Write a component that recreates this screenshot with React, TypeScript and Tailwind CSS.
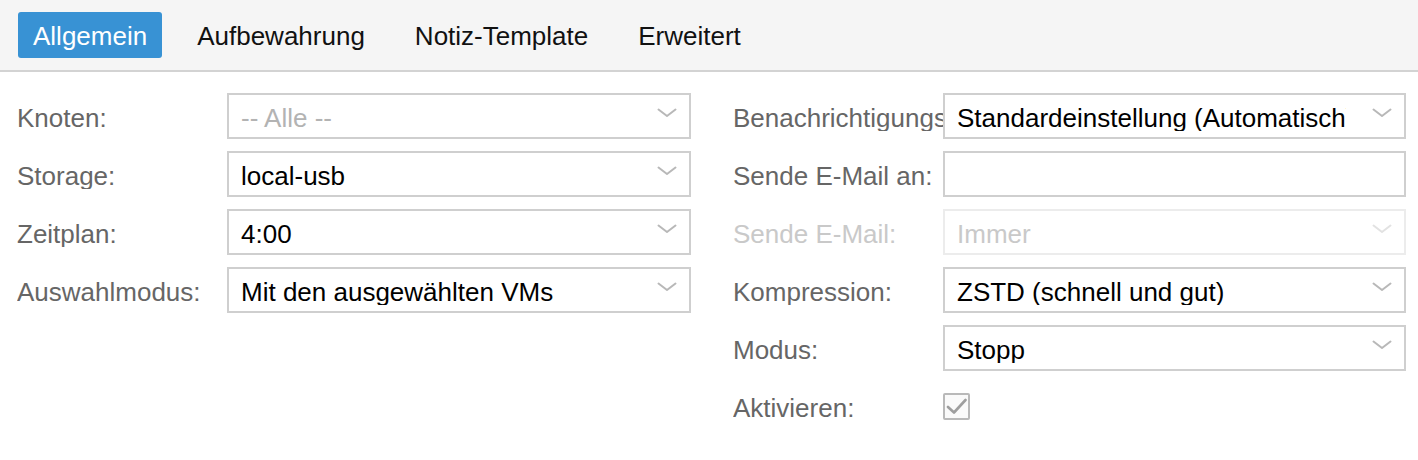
import React from "react";

const font = { fontFamily: '"Liberation Sans", Arial, sans-serif' };

function Chevron({ disabled }: { disabled?: boolean }) {
  return (
    <svg width="20" height="10" viewBox="0 0 20 10" className="shrink-0">
      <polyline
        points="1.5,1.5 10,8 18.5,1.5"
        fill="none"
        stroke={disabled ? "#e2e2e2" : "#b8b8b8"}
        strokeWidth="2"
        strokeLinecap="round"
        strokeLinejoin="round"
      />
    </svg>
  );
}

function Combo({
  value,
  placeholder,
  disabled,
  noTrigger,
}: {
  value?: string;
  placeholder?: boolean;
  disabled?: boolean;
  noTrigger?: boolean;
}) {
  const border = disabled ? "border-[#ececec]" : "border-[#cfcfcf]";
  const color = disabled ? "text-[#c9c9c9]" : placeholder ? "text-[#b3b3b3]" : "text-black";
  return (
    <div className={`flex h-[46px] min-w-0 flex-1 items-center border-2 ${border} bg-white`}>
      <div
        className={`min-w-0 flex-1 overflow-hidden whitespace-nowrap pl-[12px] pt-[4px] text-[26px] leading-none ${color}`}
      >
        {value}
      </div>
      {!noTrigger && (
        <div className="flex h-full w-[58px] shrink-0 items-center justify-end pb-[6px] pr-[12px]">
          <Chevron disabled={disabled} />
        </div>
      )}
    </div>
  );
}

function Row({
  label,
  children,
  disabled,
}: {
  label: string;
  children: React.ReactNode;
  disabled?: boolean;
}) {
  return (
    <div className="flex h-[46px] items-center">
      <div
        className={`w-[210px] shrink-0 overflow-hidden whitespace-nowrap pt-[4px] text-[26px] leading-none ${
          disabled ? "text-[#c9c9c9]" : "text-[#666666]"
        }`}
      >
        {label}
      </div>
      {children}
    </div>
  );
}

export default function App() {
  const tabs = ["Allgemein", "Aufbewahrung", "Notiz-Template", "Erweitert"];
  return (
    <div className="h-[460px] w-[1418px] overflow-hidden bg-white" style={font}>
      <div className="flex h-[72px] items-center gap-[20px] border-b-2 border-[#d3d3d3] bg-[#f5f5f5] pl-[18px] pb-[1px]">
        {tabs.map((t, i) => (
          <div
            key={t}
            className={`flex h-[46px] items-center rounded-[3px] px-[15px] pt-[2px] text-[26px] leading-none ${
              i === 0 ? "bg-[#3892d4] text-white" : "text-[#111111]"
            }`}
          >
            {t}
          </div>
        ))}
      </div>
      <div className="flex gap-[42px] pl-[17px] pr-[12px] pt-[21px]">
        <div className="flex w-[674px] shrink-0 flex-col gap-[12px]">
          <Row label="Knoten:">
            <Combo value="-- Alle --" placeholder />
          </Row>
          <Row label="Storage:">
            <Combo value="local-usb" />
          </Row>
          <Row label="Zeitplan:">
            <Combo value="4:00" />
          </Row>
          <Row label="Auswahlmodus:">
            <Combo value="Mit den ausgewählten VMs" />
          </Row>
        </div>
        <div className="flex min-w-0 flex-1 flex-col gap-[12px]">
          <Row label="Benachrichtigungsmodus:">
            <Combo value="Standardeinstellung (Automatisch)" />
          </Row>
          <Row label="Sende E-Mail an:">
            <Combo value="" noTrigger />
          </Row>
          <Row label="Sende E-Mail:" disabled>
            <Combo value="Immer" disabled />
          </Row>
          <Row label="Kompression:">
            <Combo value="ZSTD (schnell und gut)" />
          </Row>
          <Row label="Modus:">
            <Combo value="Stopp" />
          </Row>
          <Row label="Aktivieren:">
            <div className="flex h-[27px] w-[27px] items-center justify-center rounded-[2px] border-2 border-[#b9b9b9] bg-[#fafafa]">
              <svg width="21" height="17" viewBox="0 0 21 17">
                <polyline
                  points="2,9 8,14.5 19.5,2"
                  fill="none"
                  stroke="#9e9e9e"
                  strokeWidth="2.6"
                  strokeLinecap="round"
                  strokeLinejoin="round"
                />
              </svg>
            </div>
          </Row>
        </div>
      </div>
    </div>
  );
}
